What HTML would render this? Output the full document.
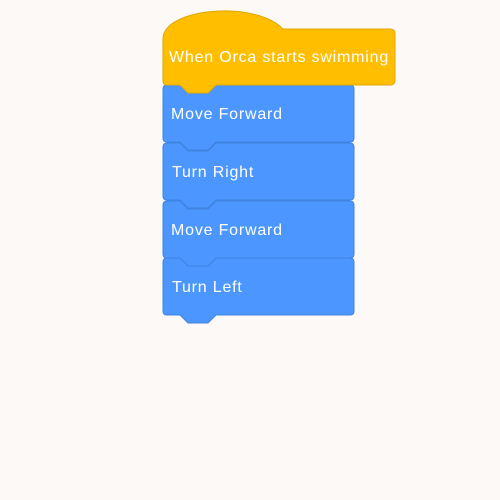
<!DOCTYPE html>
<html><head><style>
html,body{margin:0;padding:0;background:#fdf9f7;}
svg{display:block}
text{font-family:"Liberation Sans",sans-serif;font-size:16px;letter-spacing:0.8px;fill:#fff;}
</style></head><body>
<svg width="500" height="500" viewBox="0 0 500 500">
<g fill="#4c97ff" stroke="#3f83e0" stroke-width="1">
<path d="M167,258 L180,258 L188,266 L208,266 L216,258 L350,258 Q354,258 354,262 L354,311 Q354,315 350,315 L216,315 L208,323 L188,323 L180,315 L167,315 Q163,315 163,311 L163,262 Q163,258 167,258 Z"/>
<path d="M167,201 L180,201 L188,209 L208,209 L216,201 L350,201 Q354,201 354,205 L354,254 Q354,258 350,258 L216,258 L208,266 L188,266 L180,258 L167,258 Q163,258 163,254 L163,205 Q163,201 167,201 Z"/>
<path d="M167,143 L180,143 L188,151 L208,151 L216,143 L350,143 Q354,143 354,147 L354,196 Q354,200 350,200 L216,200 L208,208 L188,208 L180,200 L167,200 Q163,200 163,196 L163,147 Q163,143 167,143 Z"/>
<path d="M167,85 L180,85 L188,93 L208,93 L216,85 L350,85 Q354,85 354,89 L354,138 Q354,142 350,142 L216,142 L208,150 L188,150 L180,142 L167,142 Q163,142 163,138 L163,89 Q163,85 167,85 Z"/>
</g>
<path d="M163,38 C165,8 255,0 283,29 L390,29 Q395,29 395,34 L395,80 Q395,85 390,85 L216,85 L208,93 L188,93 L180,85 L167,85 Q163,85 163,81 Z" fill="#ffbf00" stroke="#e0a800" stroke-width="1"/>
<text x="169" y="62">When Orca starts swimming</text>
<text x="171" y="119">Move Forward</text>
<text x="172" y="177">Turn Right</text>
<text x="171" y="235">Move Forward</text>
<text x="172" y="292">Turn Left</text>
</svg>
</body></html>
